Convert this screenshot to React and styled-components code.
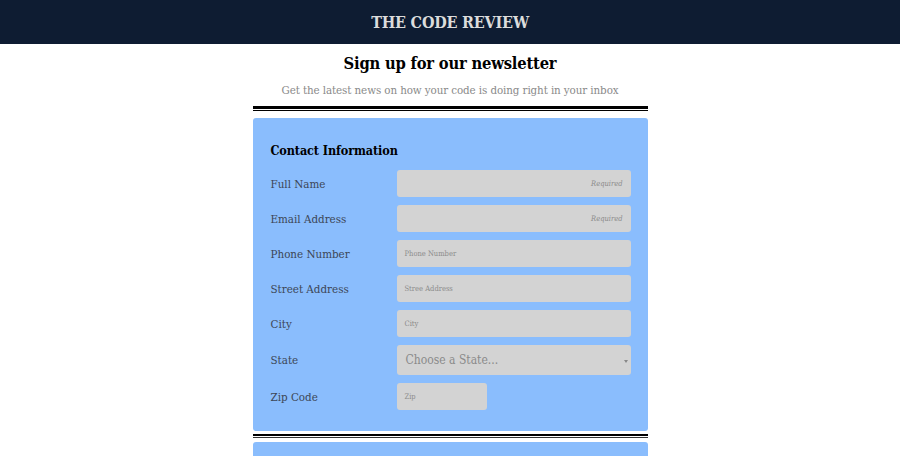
import React from "react";
import styled, { createGlobalStyle } from "styled-components";

const Global = createGlobalStyle`
  html, body { margin: 0; padding: 0; background: #fff; overflow: hidden; }
  body { font-family: "DejaVu Serif", "Liberation Serif", serif; font-stretch: condensed; }
  * { box-sizing: border-box; }
`;

const Header = styled.header`
  height: 44px;
  background: #0e1c32;
  display: flex;
  align-items: center;
  justify-content: center;
`;

const Brand = styled.h1`
  margin: 0;
  color: #dcdcdc;
  font-size: 16px;
  font-weight: 700;
  letter-spacing: -0.2px;
`;

const Main = styled.main`
  width: 395px;
  margin: 0 auto;
  display: flex;
  flex-direction: column;
`;

const Intro = styled.div`
  display: flex;
  flex-direction: column;
  align-items: center;
  padding-top: 9px;
`;

const Title = styled.h2`
  margin: 0;
  font-size: 16.4px;
  line-height: 22px;
  font-weight: 700;
  color: #000;
  letter-spacing: -0.2px;
`;

const Subtitle = styled.p`
  margin: 8px 0 0;
  font-size: 11.5px;
  line-height: 14px;
  color: #8a8a8a;
  letter-spacing: -0.1px;
`;

const Divider = styled.div`
  height: ${(p) => (p.$top ? "5px" : "4px")};
  border-top: ${(p) => (p.$top ? "3px" : "2px")} solid #000;
  border-bottom: 1px solid ${(p) => (p.$top ? "#000" : "#333")};
  margin: ${(p) => p.$m};
`;

const Card = styled.section`
  background: #8abdfd;
  border-radius: 3px;
  padding: ${(p) => p.$pad || "24px 17px 21px 18px"};
  min-height: ${(p) => p.$min || "0"};
`;

const CardTitle = styled.h3`
  margin: 0 0 11px;
  font-size: 12.5px;
  line-height: 17px;
  font-weight: 700;
  color: #000;
  letter-spacing: -0.1px;
`;

const Rows = styled.div`
  display: flex;
  flex-direction: column;
  gap: 8px;
`;

const Row = styled.label`
  display: grid;
  grid-template-columns: 126px 1fr;
  align-items: center;
`;

const Label = styled.span`
  font-size: 11.5px;
  color: #3c4656;
`;

const Field = styled.div`
  height: ${(p) => p.$h || "27px"};
  width: ${(p) => p.$w || "100%"};
  background: #d3d3d3;
  border-radius: 3px;
  display: flex;
  align-items: center;
  justify-content: ${(p) => (p.$right ? "flex-end" : "flex-start")};
  padding: 0 8px 0 8px;
`;

const Placeholder = styled.span`
  font-size: 7.5px;
  color: #8c8c8c;
  font-style: ${(p) => (p.$italic ? "italic" : "normal")};
`;

const SelectText = styled.span`
  flex: 1;
  font-size: 12px;
  color: #8a8a8a;
  padding-left: 1px;
`;

const Caret = styled.span`
  width: 0;
  height: 0;
  border-left: 2px solid transparent;
  border-right: 2px solid transparent;
  border-top: 3px solid #888;
  margin-right: -5px;
  margin-top: 2px;
`;

const fields = [
  { label: "Full Name", ph: "Required", req: true },
  { label: "Email Address", ph: "Required", req: true },
  { label: "Phone Number", ph: "Phone Number" },
  { label: "Street Address", ph: "Stree Address" },
  { label: "City", ph: "City" },
];

export default function App() {
  return (
    <>
      <Global />
      <Header>
        <Brand>THE CODE REVIEW</Brand>
      </Header>
      <Main>
        <Intro>
          <Title>Sign up for our newsletter</Title>
          <Subtitle>Get the latest news on how your code is doing right in your inbox</Subtitle>
        </Intro>
        <Divider $top $m="9px 0 7px" />
        <Card>
          <CardTitle>Contact Information</CardTitle>
          <Rows>
            {fields.map((f) => (
              <Row key={f.label}>
                <Label>{f.label}</Label>
                <Field $right={f.req}>
                  <Placeholder $italic={f.req}>{f.ph}</Placeholder>
                </Field>
              </Row>
            ))}
            <Row>
              <Label>State</Label>
              <Field $h="30px">
                <SelectText>Choose a State...</SelectText>
                <Caret />
              </Field>
            </Row>
            <Row>
              <Label>Zip Code</Label>
              <Field $w="90px">
                <Placeholder>Zip</Placeholder>
              </Field>
            </Row>
          </Rows>
        </Card>
        <Divider $m="3px 0 4px" />
        <Card $min="60px" />
      </Main>
    </>
  );
}
